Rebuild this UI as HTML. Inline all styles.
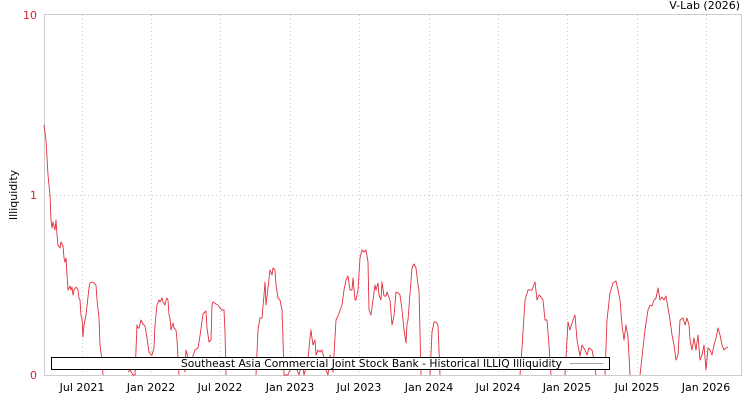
<!DOCTYPE html>
<html><head><meta charset="utf-8"><style>
html,body{margin:0;padding:0;background:#fff;width:750px;height:400px;overflow:hidden}
svg{display:block}
text{font-family:"DejaVu Sans","Liberation Sans",sans-serif;font-size:11px}
</style></head><body>
<svg width="750" height="400" viewBox="0 0 750 400">
<rect x="44.5" y="14.5" width="697" height="361" fill="none" stroke="#ccc"/>
<g stroke="#ccc" stroke-dasharray="1,3" stroke-width="1">
<line x1="44" y1="195.5" x2="741" y2="195.5"/>
<line x1="82.5" y1="15" x2="82.5" y2="375"/>
<line x1="151.5" y1="15" x2="151.5" y2="375"/>
<line x1="220.5" y1="15" x2="220.5" y2="375"/>
<line x1="290.5" y1="15" x2="290.5" y2="375"/>
<line x1="359.5" y1="15" x2="359.5" y2="375"/>
<line x1="429.5" y1="15" x2="429.5" y2="375"/>
<line x1="498.5" y1="15" x2="498.5" y2="375"/>
<line x1="567.5" y1="15" x2="567.5" y2="375"/>
<line x1="637.5" y1="15" x2="637.5" y2="375"/>
<line x1="706.5" y1="15" x2="706.5" y2="375"/>
</g>
<g fill="#d62030" text-anchor="end">
<text x="37" y="19">10</text>
<text x="37" y="199">1</text>
<text x="37" y="379">0</text>
</g>
<text x="17" y="195" text-anchor="middle" transform="rotate(-90 17 195)" fill="#000">Illiquidity</text>
<text x="740" y="9" text-anchor="end" fill="#000">V-Lab (2026)</text>
<g fill="#000" text-anchor="middle">
<text x="82" y="391">Jul 2021</text>
<text x="151" y="391">Jan 2022</text>
<text x="220" y="391">Jul 2022</text>
<text x="290" y="391">Jan 2023</text>
<text x="359" y="391">Jul 2023</text>
<text x="429" y="391">Jan 2024</text>
<text x="498" y="391">Jul 2024</text>
<text x="567" y="391">Jan 2025</text>
<text x="637" y="391">Jul 2025</text>
<text x="706" y="391">Jan 2026</text>
</g>
<g fill="none" stroke="#e0303e" stroke-width="0.9" stroke-linejoin="round">
<polyline points="44,125 46,140 48,175 50,195 51,220 52,228 53,222 55,230 56,220 57,235 58,245 60,248 61,242 63,246 64,258 65,262 66,258 67,275 68,290 70,286 71,290 72,287 73,295 74,290 76,287 78,290 79,298 80,300 81,316 82,318 83,337 84,325 86,315 87,306 89,288 90,283 92,282 94,283 96,285 97,300 99,318 100,345 102,360 103,375"/>
<polyline points="128,372 130,370 133,375 135,375 137,325 138,328 139,328 141,320 143,324 145,326 147,338 149,352 151,355 152,355 154,348 155,325 157,305 159,300 160,302 162,298 163,302 165,305 166,300 167,298 168,300 169,315 170,318 171,330 173,323 174,328 176,330 177,340 178,358 179,375"/>
<polyline points="184,360 185,372 186,350 190,365 195,350 198,348 200,336 203,314 206,311 207,328 209,342 211,340 212,305 213,302 216,304 218,305 220,308 222,310 224,310 225,332 226,375"/>
<polyline points="256,375 258,330 260,318 262,318 264,295 265,282 266,305 268,288 270,270 272,275 273,268 275,270 276,285 278,298 280,300 282,310 283,340 284,375 288,375 292,365 297,370 299,375 302,360 304,375 308,360 310,338 311,330 312,338 313,345 315,340 316,355 318,350 320,352 322,350 324,358 326,370 328,375 330,355 333,372 336,320 338,316 342,305 344,290 346,280 348,276 350,290 352,290 353,278 355,300 356,300 358,290 360,258 362,250 364,252 366,250 368,262 369,310 371,315 373,300 375,285 376,290 378,283 379,295 381,300 382,282 384,296 386,296 387,292 388,295 390,300 392,325 394,316 396,292 398,293 400,295 402,310 404,330 406,343 407,324 408,320 410,294 412,268 414,264 416,268 418,285 419,290 421,375"/>
<polyline points="430,375 432,332 434,322 436,322 438,325 440,375"/>
<polyline points="520,375 522,348 525,300 528,290 532,290 535,282 537,300 539,295 541,297 543,300 545,320 547,320 549,345 551,375"/>
<polyline points="565,375 568,322 570,330 573,320 575,315 577,340 580,356 582,345 585,350 587,355 589,348 592,350 594,360 596,375"/>
<polyline points="605,375 607,320 610,293 613,283 616,281 618,290 620,300 622,325 624,340 626,325 628,337 630,375"/>
<polyline points="640,375 645,330 648,310 650,305 652,306 654,300 656,298 658,288 660,300 662,297 664,300 666,296 668,308 670,320 672,335 674,345 676,360 678,355 680,320 683,318 685,325 687,318 689,325 690,340 692,350 694,338 696,350 698,335 700,360 702,355 704,345 706,370 708,348 710,350 712,355 714,345 716,338 718,328 720,335 722,345 724,350 726,348 728,347"/>
</g>
<rect x="51.5" y="357.5" width="558" height="12" fill="#fff" stroke="#000"/>
<text x="181" y="367" textLength="381" lengthAdjust="spacingAndGlyphs" fill="#000">Southeast Asia Commercial Joint Stock Bank - Historical ILLIQ Illiquidity</text>
<line x1="570" y1="363.5" x2="603" y2="363.5" stroke="#888" stroke-width="0.8"/>
</svg>
</body></html>
